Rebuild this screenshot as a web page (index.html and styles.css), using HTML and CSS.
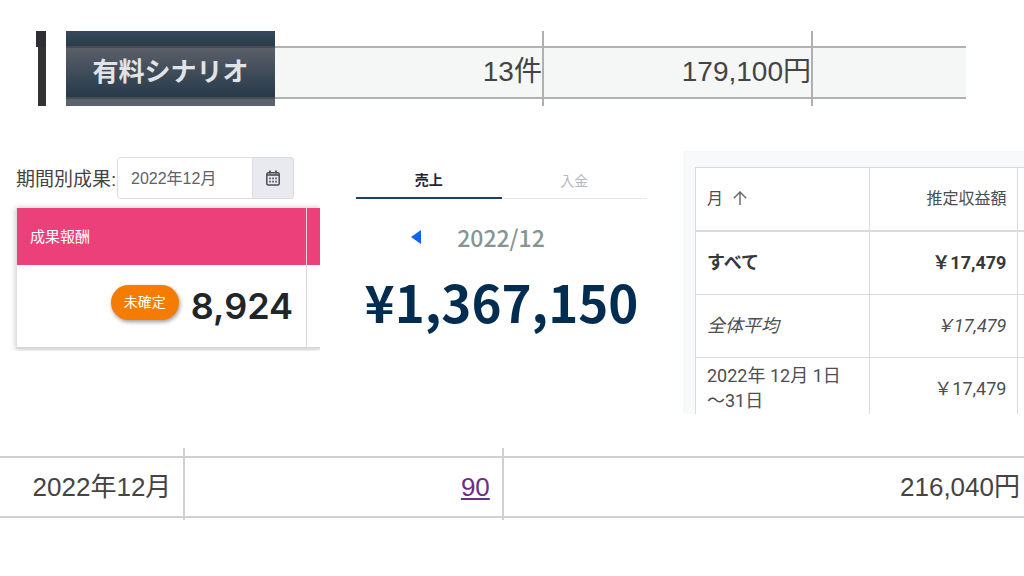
FILE: index.html
```html
<!DOCTYPE html>
<html lang="ja">
<head>
    <meta charset="UTF-8">
    <meta name="viewport" content="width=device-width, initial-scale=1.0">
    <title>2022年12月 収益</title>
    <link rel="stylesheet" href="styles.css">
</head>
<body>
    <section class="scenario">
        <div class="marker">
            <div class="marker-top"></div>
            <div class="marker-body"></div>
        </div>
        <table class="scenario-table">
            <colgroup>
                <col class="col-name">
                <col class="col-value">
                <col class="col-value">
                <col>
            </colgroup>
            <tr class="stub-top"><td class="dark"></td><td></td><td></td><td></td></tr>
            <tr class="scenario-row">
                <th class="dark" scope="row">有料シナリオ</th>
                <td>13件</td>
                <td>179,100円</td>
                <td></td>
            </tr>
            <tr class="stub-bottom"><td class="dark"></td><td></td><td></td><td></td></tr>
        </table>
    </section>

    <div class="panels">
        <section class="reward">
            <div class="period">
                <label for="period">期間別成果:</label>
                <input id="period" type="text" value="2022年12月">
                <button type="button" aria-label="カレンダー">
                    <svg width="14" height="16" viewBox="0 0 14 16" fill="none" stroke="#4a4d57">
                        <rect x="0.8" y="2.8" width="12.4" height="12.2" rx="1.5" stroke-width="1.5"/>
                        <path d="M1 5h12" stroke-width="1.6"/>
                        <path d="M4 0.5v3M10 0.5v3" stroke-width="1.8"/>
                        <path d="M3.2 8.4h7.8M3.2 11.6h7.8" stroke-width="1.7" stroke-dasharray="1.6 1.4"/>
                    </svg>
                </button>
            </div>
            <div class="reward-clip">
                <table class="reward-table">
                    <tr><th>成果報酬</th><th class="next"></th></tr>
                    <tr>
                        <td>
                            <div class="amount">
                                <span class="badge">未確定</span>
                                <strong>8,924</strong>
                            </div>
                        </td>
                        <td class="next"></td>
                    </tr>
                </table>
            </div>
        </section>

        <section class="sales">
            <div class="tabs" role="tablist">
                <button type="button" role="tab" class="active" aria-selected="true">売上</button>
                <button type="button" role="tab" aria-selected="false">入金</button>
            </div>
            <div class="month">
                <button type="button" aria-label="前の月">
                    <svg width="10" height="14" viewBox="0 0 10 14"><path d="M10 0v14L0 7z" fill="#0f62fe"/></svg>
                </button>
                <span>2022/12</span>
            </div>
            <div class="total">¥1,367,150</div>
        </section>

        <section class="report">
            <table class="report-table">
                <colgroup>
                    <col class="col-month">
                    <col class="col-income">
                    <col>
                </colgroup>
                <tr class="head">
                    <th>
                        <span class="sort">月
                            <svg width="14" height="14" viewBox="0 0 14 14" fill="none" stroke="#6b6d70" stroke-width="1.5"><path d="M7 14V1.2M0.8 7.2L7 1l6.2 6.2"/></svg>
                        </span>
                    </th>
                    <th>推定収益額</th>
                    <th></th>
                </tr>
                <tr class="all"><td>すべて</td><td>￥17,479</td><td></td></tr>
                <tr class="average"><td>全体平均</td><td>￥17,479</td><td></td></tr>
                <tr class="range"><td>2022年 12月 1日<br>～31日</td><td>￥17,479</td><td></td></tr>
            </table>
        </section>
    </div>

    <table class="monthly">
        <colgroup>
            <col class="col-date">
            <col class="col-count">
            <col>
        </colgroup>
        <tr class="stub-top"><td></td><td></td><td></td></tr>
        <tr class="monthly-row">
            <td>2022年12月</td>
            <td><a href="#">90</a></td>
            <td>216,040円</td>
        </tr>
        <tr class="stub-bottom"><td></td><td></td><td></td></tr>
    </table>
</body>
</html>
```

FILE: styles.css
```css
* {
    box-sizing: border-box;
}

body {
    margin: 0;
    padding: 31px 0 0;
    background: #fff;
    color: #444;
    font-family: "Liberation Sans", "Noto Sans CJK JP", sans-serif;
}

table {
    width: 100%;
    table-layout: fixed;
    border-collapse: separate;
    border-spacing: 0;
}

th, td {
    padding: 0;
}

button {
    padding: 0;
    border: none;
    background: none;
    font-family: inherit;
}

svg {
    display: block;
}

/* paid scenario strip */

.scenario {
    display: flex;
    gap: 20px;
    padding: 0 58px 0 36px;
}

.marker {
    display: flex;
    flex-direction: column;
    align-items: flex-end;
}

.marker-top {
    width: 10px;
    height: 16px;
    background: #2f2f33;
}

.marker-body {
    flex: 1;
    width: 8px;
    background: #333;
}

.scenario-table {
    flex: 1;
    font-size: 28px;
    line-height: 36px;
}

.col-name {
    width: 23.2%;
}

.col-value {
    width: 29.9%;
}

.scenario-table td {
    border-right: 2px solid #b0b0b0;
    text-align: right;
}

.scenario-table td:last-child,
.scenario-table .dark {
    border-right: none;
}

.scenario-table .stub-top td {
    height: 17px;
    border-bottom: 2px solid #b0b2b2;
}

.scenario-row td {
    height: 51px;
    padding-bottom: 2px;
    background: #f4f7f6;
    border-bottom: 2px solid #b0b2b2;
}

.scenario-table .stub-bottom td {
    height: 7px;
}

.scenario-row .dark {
    padding-bottom: 2px;
    background: linear-gradient(#5b5f68, #3f4c59 50%, #273a49);
    border-bottom: 2px solid #4b4a50;
    color: #e2e3e7;
    font-size: 26px;
}

.scenario-table .stub-top .dark {
    background: linear-gradient(#34495b, #2a3c4a);
    border-bottom-color: #4b4a50;
}

.stub-bottom .dark {
    background: #5a626e;
}

/* three panels */

.panels {
    display: grid;
    grid-template-columns: minmax(0, 304fr) minmax(0, 291fr) minmax(0, 341fr);
    gap: 36px;
    margin-top: 45px;
    padding-left: 16px;
}

.reward {
    padding-top: 6px;
}

.period {
    display: flex;
    align-items: center;
    height: 42px;
    padding-right: 26px;
}

.period label {
    width: 101px;
    padding-bottom: 2px;
    font-size: 19px;
    white-space: nowrap;
}

.period input {
    flex: 1;
    min-width: 0;
    height: 42px;
    padding: 0 13px 2px;
    border: 1px solid #dddee2;
    border-radius: 4px 0 0 4px;
    color: #606268;
    font-family: inherit;
    font-size: 16px;
}

.period button {
    display: flex;
    align-items: center;
    justify-content: center;
    width: 41px;
    height: 42px;
    border: 1px solid #d9dae0;
    border-left: none;
    border-radius: 0 4px 4px 0;
    background: #e9eaf0;
}

.reward-clip {
    margin-left: -8px;
    padding: 9px 0 2px 8px;
    overflow: hidden;
}

.reward-table {
    border-left: 1px solid #e0e0e0;
    border-bottom: 2px solid #d8d8d8;
    box-shadow: 0 0 6px rgba(0, 0, 0, 0.25);
    background: #fff;
}

.reward-table th {
    height: 57px;
    padding: 0 0 2px 13px;
    background: #ec407a;
    color: #fff;
    font-size: 15px;
    font-weight: 400;
    text-align: left;
}

.reward-table td {
    height: 82px;
}

.reward-table .next {
    width: 14px;
    padding: 0;
    border-left: 1px solid #e3d5de;
}

.amount {
    display: flex;
    align-items: center;
    justify-content: flex-end;
    gap: 12px;
    padding-right: 13px;
}

.badge {
    width: 68px;
    margin-bottom: 8px;
    border-radius: 18px;
    background: #f57c00;
    box-shadow: 1px 2px 4px rgba(0, 0, 0, 0.4);
    color: #fff;
    font-size: 14px;
    line-height: 35px;
    text-align: center;
}

.amount strong {
    color: #212529;
    font-family: Inter, sans-serif;
    font-size: 36px;
    font-weight: 600;
}

.sales {
    padding-top: 12px;
    font-family: "Noto Sans CJK JP", sans-serif;
}

.tabs {
    display: flex;
}

.tabs button {
    flex: 1;
    height: 36px;
    padding-bottom: 2px;
    border-bottom: 1px solid #e6e8ea;
    color: #b5b9c0;
    font-size: 14px;
}

.tabs .active {
    border-bottom: 2px solid #1f4262;
    color: #222437;
    font-weight: 700;
}

.month {
    display: flex;
    align-items: center;
    justify-content: center;
    gap: 36px;
    height: 40px;
    margin-top: 18px;
    padding-right: 47px;
    color: #869492;
    font-size: 23px;
    font-weight: 500;
}

.total {
    margin-top: 14px;
    color: #032d50;
    font-size: 51px;
    font-weight: 700;
    line-height: 60px;
    text-align: center;
    white-space: nowrap;
}

.report {
    height: 263px;
    padding: 16px 0 0 12px;
    overflow: hidden;
    background: #f8f9fb;
}

.report-table {
    border-top: 1px solid #dadbdd;
    border-left: 1px solid #dadbdd;
    background: #fff;
    color: #4c4e51;
    font-family: Roboto, "Noto Sans CJK JP", sans-serif;
    font-size: 18px;
    line-height: 25px;
}

.col-month {
    width: 53%;
}

.col-income {
    width: 45.3%;
}

.report-table th,
.report-table td {
    height: 63px;
    padding: 0 11px 2px;
    border-right: 1px solid #dadbdd;
    border-bottom: 1px solid #dadbdd;
    text-align: left;
    white-space: nowrap;
}

.report-table th:nth-child(2),
.report-table td:nth-child(2) {
    text-align: right;
}

.report-table th:last-child,
.report-table td:last-child {
    padding: 0;
    border-right: none;
}

.report-table .head th {
    height: 64px;
    border-bottom-width: 2px;
    font-size: 16px;
    font-weight: 400;
}

.sort {
    display: flex;
    align-items: center;
    gap: 10px;
}

.report-table .all {
    color: #36383b;
    font-weight: 700;
}

.average {
    font-style: italic;
}

/* monthly strip */

.monthly {
    margin-top: 34px;
    font-size: 26px;
    line-height: 36px;
}

.col-date {
    width: 18.1%;
}

.col-count {
    width: 31.1%;
}

.monthly td {
    border-right: 2px solid #d0d0d0;
    text-align: right;
}

.monthly td:last-child {
    border-right: none;
}

.monthly .stub-top td {
    height: 10px;
    border-bottom: 2px solid #d0d0d0;
}

.monthly-row td {
    height: 60px;
    padding-right: 12px;
    border-bottom: 2px solid #d0d0d0;
}

.monthly-row td:last-child {
    padding-right: 4px;
}

.monthly .stub-bottom td {
    height: 2px;
}

.monthly a {
    color: #6b2f86;
}
```
